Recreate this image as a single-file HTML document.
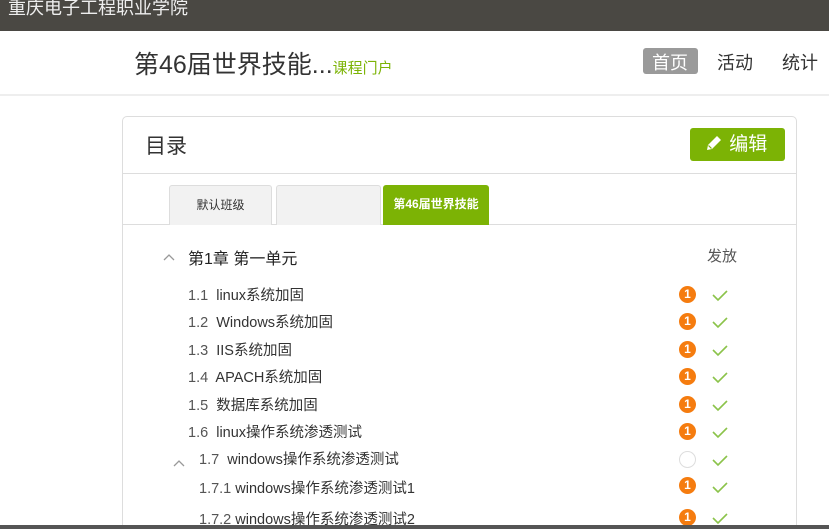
<!DOCTYPE html>
<html style="width:829px;height:529px;overflow:hidden"><head><meta charset="utf-8"><style>
*{margin:0;padding:0;box-sizing:border-box}
body{width:829px;height:529px;overflow:hidden;background:#fff;position:relative;font-family:"Liberation Sans","Noto Sans CJK SC",sans-serif;color:#333}
.a{position:absolute;white-space:nowrap}
.top{left:0;top:0;width:829px;height:31px;background:#4a4843}
.num{width:17px;height:17px;border-radius:50%;background:#f57c0f;color:#fff;font-size:12px;font-weight:bold;text-align:center;line-height:17px}
.row{font-size:14.5px;color:#333}
.row span{color:#555}
</style></head><body>
<div class="a top"></div>
<div class="a" style="left:8px;top:-6px;font-size:18px;color:#eee;">重庆电子工程职业学院</div>
<div class="a" style="left:0;top:94px;width:829px;height:2px;background:#eee"></div>
<div class="a" style="left:134px;top:45px;font-size:25px;color:#333">第46届世界技能...<span style="font-size:15px;color:#7cb305">课程门户</span></div>
<div class="a" style="left:643px;top:48px;width:55px;height:26px;background:#9a9a9a;border-radius:3px"></div>
<div class="a" style="left:652px;top:49px;font-size:18px;color:#fff">首页</div>
<div class="a" style="left:717px;top:49px;font-size:18px;color:#333">活动</div>
<div class="a" style="left:782px;top:49px;font-size:18px;color:#333">统计</div>
<div class="a" style="left:122px;top:116px;width:675px;height:430px;border:1px solid #ddd;border-radius:5px"></div>
<div class="a" style="left:145px;top:130px;font-size:21px;color:#333">目录</div>
<div class="a" style="left:690px;top:128px;width:95px;height:33px;background:#7cb305;border-radius:3px;color:#fff;font-size:19px;line-height:33px;padding-left:14px">
<svg width="20" height="20" viewBox="0 0 20 20" style="vertical-align:-3px"><path d="M3 17l1-5 9-9 4 4-9 9z" fill="#fff"/><path d="M4.5 12.5l3 3" stroke="#7cb305" stroke-width="1.2"/></svg> 编辑</div>
<div class="a" style="left:123px;top:173px;width:673px;height:1px;background:#ddd"></div>
<div class="a" style="left:123px;top:224px;width:673px;height:1px;background:#ddd"></div>
<div class="a" style="left:169px;top:185px;width:103px;height:40px;background:#f2f2f2;border:1px solid #ddd;border-bottom:none;border-radius:3px 3px 0 0;font-size:12px;text-align:center;line-height:38px;color:#333">默认班级</div>
<div class="a" style="left:276px;top:185px;width:105px;height:40px;background:#f2f2f2;border:1px solid #ddd;border-bottom:none;border-radius:3px 3px 0 0"></div>
<div class="a" style="left:383px;top:185px;width:106px;height:40px;background:#7cb305;border-radius:3px 3px 0 0;font-size:12px;text-align:center;line-height:38px;color:#fff;font-weight:bold">第46届世界技能</div>
<svg class="a" style="left:163px;top:253px" width="12" height="8" viewBox="0 0 12 8"><path d="M1 7l5-5 5 5" fill="none" stroke="#999" stroke-width="1.3"/></svg>
<div class="a" style="left:188px;top:245px;font-size:16px;color:#222">第1章 第一单元</div>
<div class="a" style="left:707px;top:245px;font-size:15px;color:#555">发放</div>

<div class="a row" style="left:188px;top:284px"><span>1.1</span>&nbsp; linux系统加固</div>
<div class="a row" style="left:188px;top:311px"><span>1.2</span>&nbsp; Windows系统加固</div>
<div class="a row" style="left:188px;top:339px"><span>1.3</span>&nbsp; IIS系统加固</div>
<div class="a row" style="left:188px;top:366px"><span>1.4</span>&nbsp; APACH系统加固</div>
<div class="a row" style="left:188px;top:394px"><span>1.5</span>&nbsp; 数据库系统加固</div>
<div class="a row" style="left:188px;top:421px"><span>1.6</span>&nbsp; linux操作系统渗透测试</div>
<svg class="a" style="left:173px;top:459px" width="12" height="8" viewBox="0 0 12 8"><path d="M1 7l5-5 5 5" fill="none" stroke="#999" stroke-width="1.3"/></svg>
<div class="a row" style="left:199px;top:448px"><span>1.7</span>&nbsp; windows操作系统渗透测试</div>
<div class="a row" style="left:199px;top:477px"><span>1.7.1</span> windows操作系统渗透测试1</div>
<div class="a row" style="left:199px;top:508px"><span>1.7.2</span> windows操作系统渗透测试2</div>

<div class="a num" style="left:679px;top:286px">1</div>
<div class="a num" style="left:679px;top:313px">1</div>
<div class="a num" style="left:679px;top:341px">1</div>
<div class="a num" style="left:679px;top:368px">1</div>
<div class="a num" style="left:679px;top:396px">1</div>
<div class="a num" style="left:679px;top:423px">1</div>
<div class="a" style="left:679px;top:451px;width:17px;height:17px;border-radius:50%;border:1.5px solid #ddd"></div>
<div class="a num" style="left:679px;top:477px">1</div>
<div class="a num" style="left:679px;top:509px">1</div>
<svg class="a" style="left:710px;top:284px" width="20" height="245" viewBox="0 0 20 245">
<g fill="none" stroke="#8bc34a" stroke-width="1.6">
<path d="M3 11l5 5 9-9"/><path d="M3 38l5 5 9-9"/><path d="M3 66l5 5 9-9"/><path d="M3 93l5 5 9-9"/><path d="M3 121l5 5 9-9"/><path d="M3 148l5 5 9-9"/><path d="M3 176l5 5 9-9"/><path d="M3 203l5 5 9-9"/><path d="M3 234l5 5 9-9"/>
</g></svg>
<div class="a" style="left:0;top:525px;width:829px;height:4px;background:#555"></div>
</body></html>
